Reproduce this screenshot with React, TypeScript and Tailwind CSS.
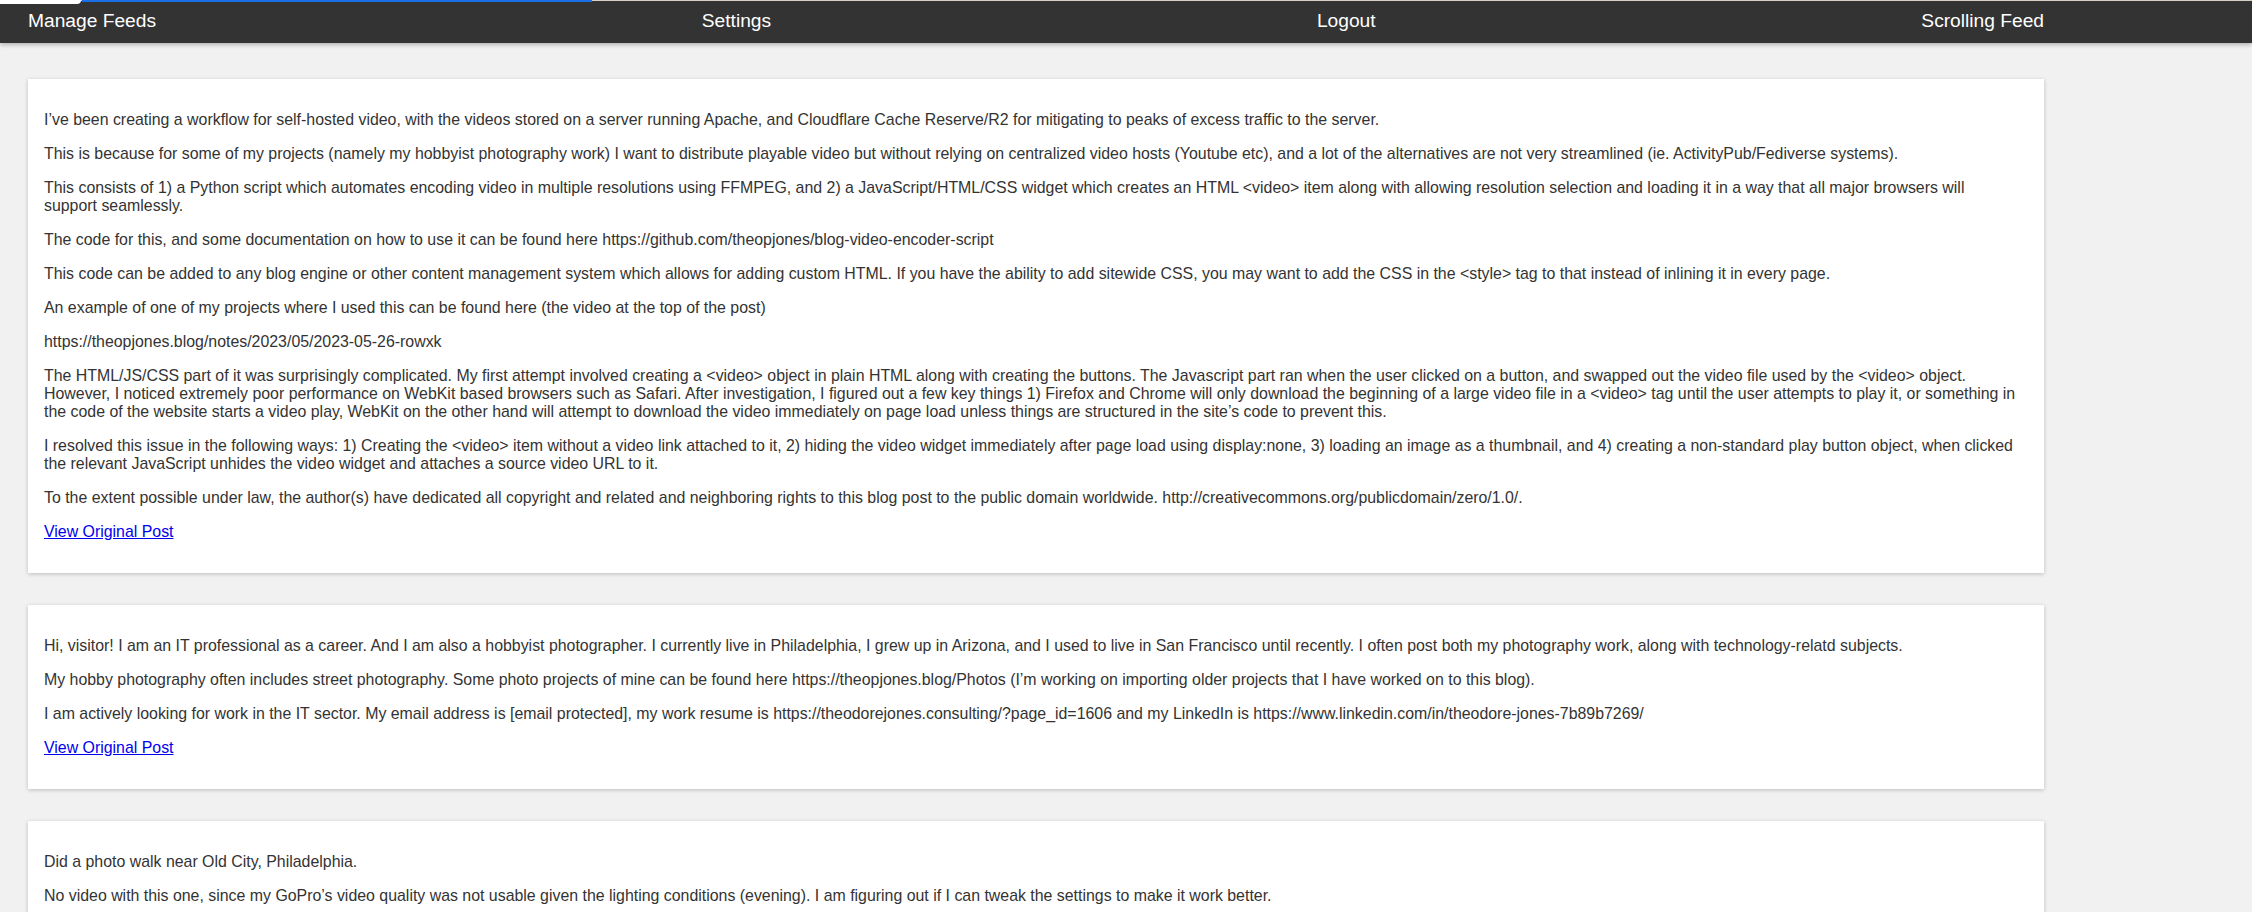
const navItems = ["Manage Feeds", "Settings", "Logout", "Scrolling Feed"];

const posts = [
  {
    id: 1,
    paragraphs: [
      "I’ve been creating a workflow for self-hosted video, with the videos stored on a server running Apache, and Cloudflare Cache Reserve/R2 for mitigating to peaks of excess traffic to the server.",
      "This is because for some of my projects (namely my hobbyist photography work) I want to distribute playable video but without relying on centralized video hosts (Youtube etc), and a lot of the alternatives are not very streamlined (ie. ActivityPub/Fediverse systems).",
      "This consists of 1) a Python script which automates encoding video in multiple resolutions using FFMPEG, and 2) a JavaScript/HTML/CSS widget which creates an HTML <video> item along with allowing resolution selection and loading it in a way that all major browsers will support seamlessly.",
      "The code for this, and some documentation on how to use it can be found here https://github.com/theopjones/blog-video-encoder-script",
      "This code can be added to any blog engine or other content management system which allows for adding custom HTML. If you have the ability to add sitewide CSS, you may want to add the CSS in the <style> tag to that instead of inlining it in every page.",
      "An example of one of my projects where I used this can be found here (the video at the top of the post)",
      "https://theopjones.blog/notes/2023/05/2023-05-26-rowxk",
      "The HTML/JS/CSS part of it was surprisingly complicated. My first attempt involved creating a <video> object in plain HTML along with creating the buttons. The Javascript part ran when the user clicked on a button, and swapped out the video file used by the <video> object. However, I noticed extremely poor performance on WebKit based browsers such as Safari. After investigation, I figured out a few key things 1) Firefox and Chrome will only download the beginning of a large video file in a <video> tag until the user attempts to play it, or something in the code of the website starts a video play, WebKit on the other hand will attempt to download the video immediately on page load unless things are structured in the site’s code to prevent this.",
      "I resolved this issue in the following ways: 1) Creating the <video> item without a video link attached to it, 2) hiding the video widget immediately after page load using display:none, 3) loading an image as a thumbnail, and 4) creating a non-standard play button object, when clicked the relevant JavaScript unhides the video widget and attaches a source video URL to it.",
      "To the extent possible under law, the author(s) have dedicated all copyright and related and neighboring rights to this blog post to the public domain worldwide. http://creativecommons.org/publicdomain/zero/1.0/.",
    ],
  },
  {
    id: 2,
    paragraphs: [
      "Hi, visitor! I am an IT professional as a career. And I am also a hobbyist photographer. I currently live in Philadelphia, I grew up in Arizona, and I used to live in San Francisco until recently. I often post both my photography work, along with technology-relatd subjects.",
      "My hobby photography often includes street photography. Some photo projects of mine can be found here https://theopjones.blog/Photos (I’m working on importing older projects that I have worked on to this blog).",
      "I am actively looking for work in the IT sector. My email address is [email protected], my work resume is https://theodorejones.consulting/?page_id=1606 and my LinkedIn is https://www.linkedin.com/in/theodore-jones-7b89b7269/",
    ],
  },
  {
    id: 3,
    paragraphs: [
      "Did a photo walk near Old City, Philadelphia.",
      "No video with this one, since my GoPro’s video quality was not usable given the lighting conditions (evening). I am figuring out if I can tweak the settings to make it work better.",
      "Photos from the walk are below.",
    ],
  },
];

export default function App() {
  return (
    <div className="min-h-screen bg-[#f1f1f1] font-['Liberation_Sans',Arial,sans-serif] text-[#333]">
      {/* barre du haut */}
      <nav className="relative h-[43px] bg-[#333] shadow-[0_2px_4px_rgba(0,0,0,0.25)]">
        <div className="absolute left-0 top-0 h-[1px] w-full bg-[#d6cfc4]"></div>
        <div className="absolute left-[82px] top-0 h-[2px] w-[510px] bg-[#1a6ee6]"></div>
        <div className="absolute left-0 top-0 h-[4px] w-[81px] rounded-br-[4px] bg-white"></div>
        <div className="ml-[28px] flex h-full w-[2016px] items-center justify-between">
          {navItems.map((item) => (
            <a key={item} className="cursor-pointer text-[19.2px] text-white">
              {item}
            </a>
          ))}
        </div>
      </nav>

      <main className="flex flex-col gap-[32px] pb-[32px] pl-[28px] pt-[36px]">
        {posts.map((post) => (
          <PostCard key={post.id} paragraphs={post.paragraphs} />
        ))}
      </main>
    </div>
  );
}

function PostCard({ paragraphs }: { paragraphs: string[] }) {
  return (
    <article className="w-[2016px] bg-white py-[16px] pl-[16px] pr-[25px] shadow-[0_1px_4px_rgba(0,0,0,0.22)]">
      <div className="flex flex-col gap-[16px] py-[16px] text-[15.9px] leading-[18px]">
        {paragraphs.map((text, idx) => (
          <p key={idx}>{text}</p>
        ))}
        <p>
          <a className="cursor-pointer text-[#0000ee] underline">View Original Post</a>
        </p>
      </div>
    </article>
  );
}
